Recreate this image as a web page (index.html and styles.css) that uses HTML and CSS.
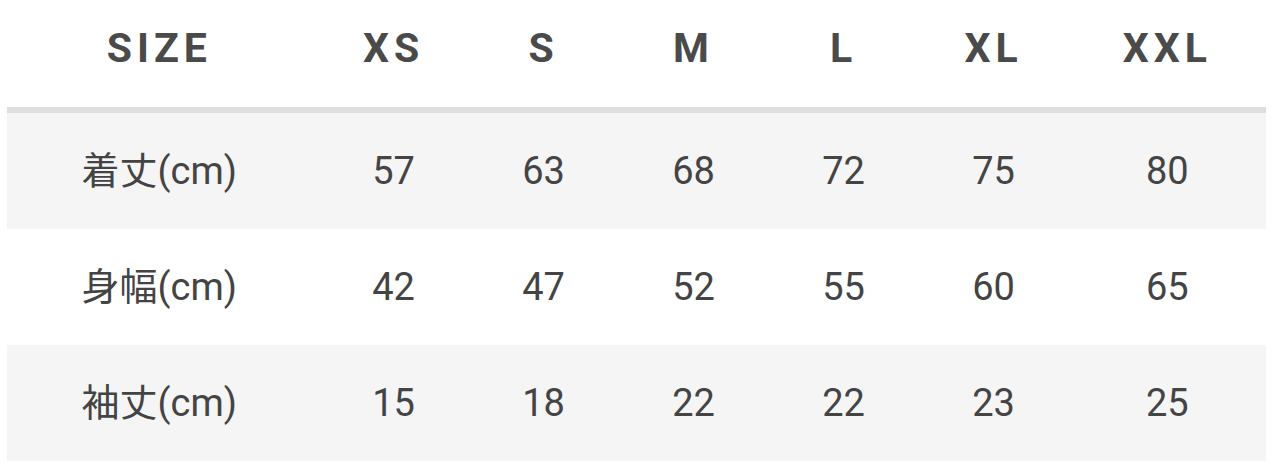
FILE: index.html
```html
<!DOCTYPE html>
<html lang="ja">
<head>
<meta charset="utf-8">
<title>Size chart</title>
<link rel="stylesheet" href="styles.css">
</head>
<body>
<div class="chart">
  <div class="row head">
    <div class="cell label">SIZE</div>
    <div class="cell">XS</div>
    <div class="cell">S</div>
    <div class="cell">M</div>
    <div class="cell">L</div>
    <div class="cell">XL</div>
    <div class="cell">XXL</div>
  </div>
  <div class="row body shade">
    <div class="cell label">着丈(cm)</div>
    <div class="cell">57</div>
    <div class="cell">63</div>
    <div class="cell">68</div>
    <div class="cell">72</div>
    <div class="cell">75</div>
    <div class="cell">80</div>
  </div>
  <div class="row body">
    <div class="cell label">身幅(cm)</div>
    <div class="cell">42</div>
    <div class="cell">47</div>
    <div class="cell">52</div>
    <div class="cell">55</div>
    <div class="cell">60</div>
    <div class="cell">65</div>
  </div>
  <div class="row body shade">
    <div class="cell label">袖丈(cm)</div>
    <div class="cell">15</div>
    <div class="cell">18</div>
    <div class="cell">22</div>
    <div class="cell">22</div>
    <div class="cell">23</div>
    <div class="cell">25</div>
  </div>
</div>
</body>
</html>
```

FILE: styles.css
```css
html, body {
  margin: 0;
  padding: 0;
  background: #ffffff;
}

body {
  font-family: Roboto, "Noto Sans CJK JP", sans-serif;
  color: #444444;
}

.chart {
  width: 1259px;
  margin: 0 7px;
}

.row {
  display: grid;
  grid-template-columns: 311.5px repeat(5, 150px) 1fr;
  align-items: center;
}

.cell {
  text-align: center;
  white-space: nowrap;
}

.label {
  padding-right: 7px;
}

.head {
  height: 107px;
  box-sizing: content-box;
  border-bottom: 6px solid #dedede;
  align-items: start;
}

.head .cell {
  padding-top: 27px;
  font-size: 41px;
  line-height: 42px;
  font-weight: 700;
  letter-spacing: 0.12em;
  color: #4a4a4a;
}

.body {
  height: 116px;
  font-size: 38px;
  line-height: 44px;
  color: #444444;
}

.shade {
  background: #f5f5f5;
}
```
